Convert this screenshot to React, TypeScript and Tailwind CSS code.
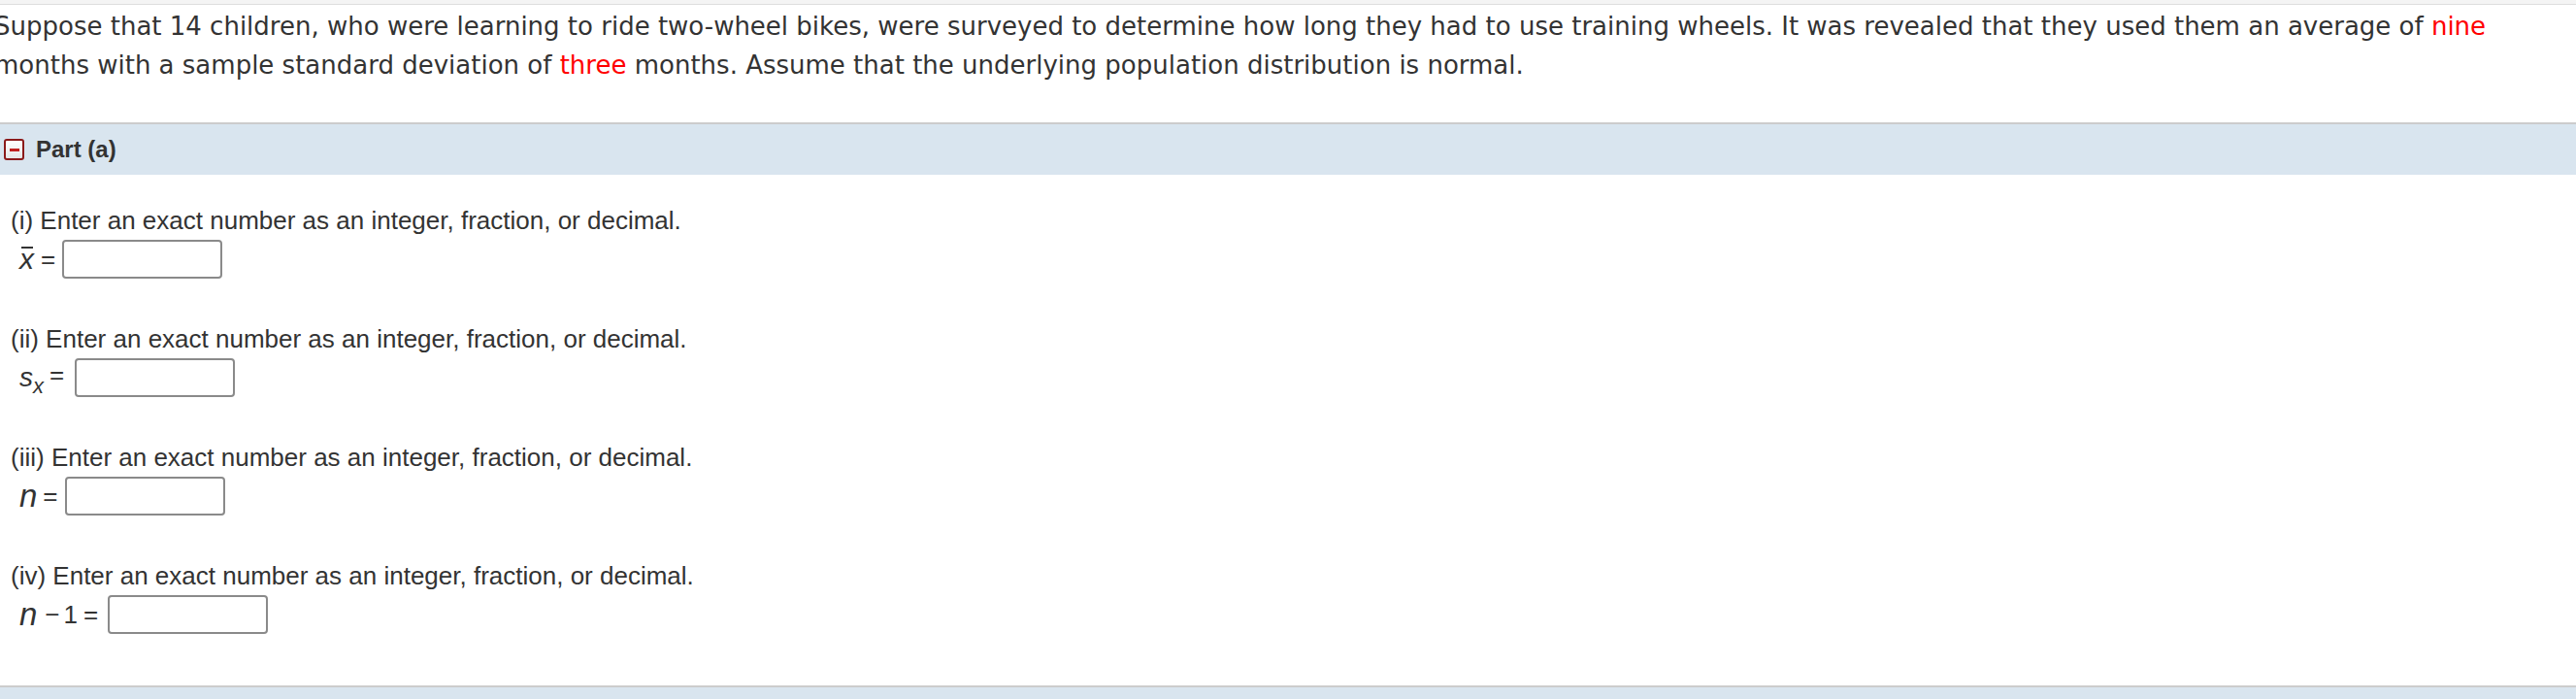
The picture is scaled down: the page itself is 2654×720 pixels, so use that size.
import React from "react";

function Box() {
  return <div className="w-[165px] h-[40px] border-2 border-[#8a8a8a] rounded-[4px] bg-white shrink-0" />;
}

function Question({ roman }: { roman: string }) {
  return (
    <div className="h-[30px] leading-[30px] text-[26px] whitespace-nowrap pl-[11px] text-[#333]">
      ({roman}) Enter an exact number as an integer, fraction, or decimal.
    </div>
  );
}

export default function App() {
  return (
    <div className="w-[2654px] h-[720px] overflow-hidden bg-white text-[#333]">
      <div className="h-[5px] bg-[#f4f4f4] border-b border-[#dddddd]" />
      <div className="pt-[2px] pb-[39px] -ml-[6px] font-['DejaVu_Sans',Verdana,sans-serif] text-[26px] leading-[40px] text-[#333]">
        <div className="whitespace-nowrap">
          Suppose that 14 children, who were learning to ride two-wheel bikes, were surveyed to determine how long they had to use training wheels. It was revealed that they used them an average of <span className="text-[#ff0000]">nine</span>
        </div>
        <div className="whitespace-nowrap">
          months with a sample standard deviation of <span className="text-[#ff0000]">three</span> months. Assume that the underlying population distribution is normal.
        </div>
      </div>
      <div className="h-[54px] border-t-2 border-[#cccccc] bg-[#d9e5ef] flex items-center pl-[4px] font-['Liberation_Sans',Arial,sans-serif]">
        <div className="w-[21px] h-[22px] border-2 border-[#8b1a1a] rounded-[3px] bg-gradient-to-b from-white to-[#e6e6e6] flex items-center justify-center">
          <div className="w-[10px] h-[3px] bg-[#c0201e]" />
        </div>
        <div className="ml-[12px] font-bold text-[24px] text-[#333]">Part (a)</div>
      </div>

      <div className="pt-[32px] font-['Liberation_Sans',Arial,sans-serif]">
        <div className="h-[122px]">
          <Question roman="i" />
          <div className="mt-[5px] flex items-center h-[40px] pl-[20px]">
            <div className="w-[44px] flex items-center">
              <span className="relative inline-block italic text-[30px] leading-[30px]">
                x
                <span className="absolute left-[2px] top-[2px] w-[12px] h-[2px] bg-[#333]" />
              </span>
              <span className="ml-[7px] text-[26px] leading-[30px]">=</span>
            </div>
            <Box />
          </div>
        </div>

        <div className="h-[122px]">
          <Question roman="ii" />
          <div className="mt-[5px] flex items-center h-[40px] pl-[20px]">
            <div className="w-[57px] flex items-center">
              <span className="italic text-[28px] leading-[30px]">s</span>
              <span className="italic text-[22px] leading-[22px] relative top-[9px]">x</span>
              <span className="ml-[6px] text-[26px] leading-[30px] relative -top-[3px]">=</span>
            </div>
            <Box />
          </div>
        </div>

        <div className="h-[122px]">
          <Question roman="iii" />
          <div className="mt-[5px] flex items-center h-[40px] pl-[20px]">
            <div className="w-[47px] flex items-center">
              <span className="italic text-[33px] leading-[30px]">n</span>
              <span className="ml-[6px] text-[26px] leading-[30px]">=</span>
            </div>
            <Box />
          </div>
        </div>

        <div className="h-[128px]">
          <Question roman="iv" />
          <div className="mt-[5px] flex items-center h-[40px] pl-[20px]">
            <div className="w-[91px] flex items-center">
              <span className="italic text-[33px] leading-[30px]">n</span>
              <span className="ml-[8px] text-[26px] leading-[30px]">−</span>
              <span className="ml-[4px] text-[26px] leading-[30px]">1</span>
              <span className="ml-[6px] text-[26px] leading-[30px]">=</span>
            </div>
            <Box />
          </div>
        </div>
      </div>
      <div className="h-[40px] border-t-2 border-[#cccccc] bg-[#d9e5ef]" />
    </div>
  );
}
